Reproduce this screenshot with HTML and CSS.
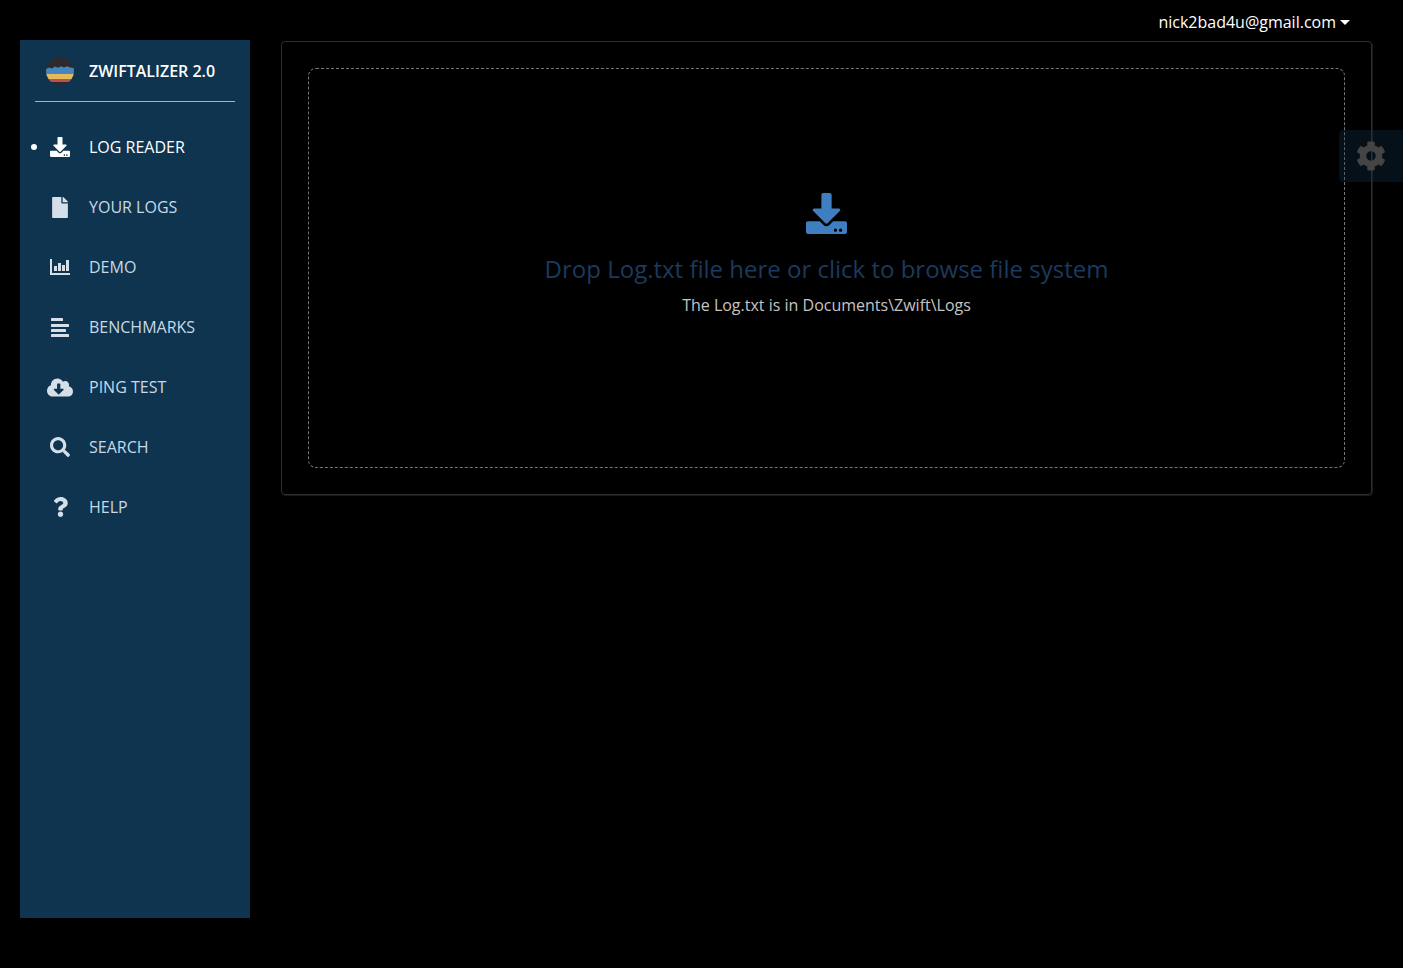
FILE: index.html
```html
<!DOCTYPE html>
<html lang="en">
<head>
  <meta charset="UTF-8">
  <meta name="viewport" content="width=device-width, initial-scale=1.0">
  <title>Zwiftalizer 2.0 - Log Reader</title>
  <link rel="stylesheet" href="styles.css">
</head>
<body>

<div class="sidebar">
  <div class="brand">
    <svg class="logo" viewBox="0 0 28 28">
      <defs><clipPath id="logo-clip"><circle cx="14" cy="14" r="14"/></clipPath></defs>
      <g clip-path="url(#logo-clip)">
        <rect width="28" height="28" fill="#2b2a2c"/>
        <path d="M0 12l3-1.4 3 .8 3-1.8 3 1.2 3-1.6 3 1.2 3-1.2 3 1.2 4 .6V17H0z" fill="#4585c2"/>
        <rect y="17" width="28" height="5.5" fill="#e3bb58"/>
        <rect y="22.5" width="28" height="2.5" fill="#b8505a"/>
      </g>
    </svg>
    <span class="brand-name">ZWIFTALIZER 2.0</span>
  </div>

  <ul class="menu">
    <li class="menu-item active">
      <span class="menu-icon">
        <svg class="icon-download" viewBox="0 0 512 512"><path d="M216 0h80c13.3 0 24 10.7 24 24v168h87.7c17.8 0 26.7 21.5 14.1 34.1L269.7 378.3c-7.5 7.5-19.8 7.5-27.3 0L90.1 226.1c-12.6-12.6-3.7-34.1 14.1-34.1H192V24c0-13.3 10.7-24 24-24zm296 376v112c0 13.3-10.7 24-24 24H24c-13.3 0-24-10.7-24-24V376c0-13.3 10.7-24 24-24h146.7l49 49c20.1 20.1 52.5 20.1 72.6 0l49-49H488c13.3 0 24 10.7 24 24zm-124 88c0-11-9-20-20-20s-20 9-20 20 9 20 20 20 20-9 20-20zm64 0c0-11-9-20-20-20s-20 9-20 20 9 20 20 20 20-9 20-20z"/></svg>
      </span>
      LOG READER
    </li>
    <li class="menu-item">
      <span class="menu-icon">
        <svg class="icon-file" viewBox="0 0 384 512"><path d="M224 136V0H24C10.7 0 0 10.7 0 24v464c0 13.3 10.7 24 24 24h336c13.3 0 24-10.7 24-24V160H248c-13.2 0-24-10.8-24-24zm160-14.1v6.1H256V0h6.1c6.4 0 12.5 2.5 17 7l97.9 98c4.5 4.5 7 10.6 7 16.9z"/></svg>
      </span>
      YOUR LOGS
    </li>
    <li class="menu-item">
      <span class="menu-icon">
        <svg class="icon-chart" viewBox="0 0 20 16"><path d="M0 0h2v14h18v2H0z"/><rect x="4" y="7" width="3" height="5"/><rect x="8" y="4" width="3" height="8"/><rect x="12" y="6" width="3" height="6"/><rect x="16" y="1" width="3" height="11"/></svg>
      </span>
      DEMO
    </li>
    <li class="menu-item">
      <span class="menu-icon">
        <svg class="icon-lines" viewBox="0 0 18 19"><rect width="12" height="3" rx=".6"/><rect y="6" width="18" height="3" rx=".6"/><rect y="11" width="15" height="3" rx=".6"/><rect y="16" width="18" height="3" rx=".6"/></svg>
      </span>
      BENCHMARKS
    </li>
    <li class="menu-item">
      <span class="menu-icon">
        <svg class="icon-cloud" viewBox="0 0 640 512"><path d="M537.6 226.6c4.1-10.7 6.4-22.4 6.4-34.6 0-53-43-96-96-96-19.7 0-38.1 6-53.3 16.2C367 64.2 315.3 32 256 32c-88.4 0-160 71.6-160 160 0 2.7.1 5.4.2 8.1C40.2 219.8 0 273.2 0 336c0 79.5 64.5 144 144 144h368c70.7 0 128-57.3 128-128 0-61.9-44-113.6-102.4-125.4zm-132.9 88.7L299.3 420.7c-6.2 6.2-16.4 6.2-22.6 0L171.3 315.3c-10.1-10.1-2.9-27.3 11.3-27.3H248V176c0-8.8 7.2-16 16-16h48c8.8 0 16 7.2 16 16v112h65.4c14.2 0 21.4 17.2 11.3 27.3z"/></svg>
      </span>
      PING TEST
    </li>
    <li class="menu-item">
      <span class="menu-icon">
        <svg class="icon-search" viewBox="0 0 512 512"><path d="M505 442.7L405.3 343c-4.5-4.5-10.6-7-17-7H372c27.6-35.3 44-79.7 44-128C416 93.1 322.9 0 208 0S0 93.1 0 208s93.1 208 208 208c48.3 0 92.7-16.4 128-44v16.3c0 6.4 2.5 12.5 7 17l99.7 99.7c9.4 9.4 24.6 9.4 33.9 0l28.3-28.3c9.4-9.4 9.4-24.6.1-34zM208 336c-70.7 0-128-57.2-128-128 0-70.7 57.2-128 128-128 70.7 0 128 57.2 128 128 0 70.7-57.2 128-128 128z"/></svg>
      </span>
      SEARCH
    </li>
    <li class="menu-item">
      <span class="menu-icon">
        <svg class="icon-help" viewBox="0 0 384 512"><path d="M202.021 0C122.202 0 70.503 32.703 29.914 91.026c-7.363 10.58-5.093 25.086 5.178 32.874l43.138 32.709c10.373 7.865 25.132 6.026 33.253-4.148 25.049-31.381 43.63-49.449 82.757-49.449 30.764 0 68.816 19.799 68.816 49.631 0 22.552-18.617 34.134-48.993 51.164-35.423 19.86-82.299 44.576-82.299 106.405V320c0 13.255 10.745 24 24 24h72.471c13.255 0 24-10.745 24-24v-5.773c0-42.86 125.268-44.645 125.268-160.627C377.504 66.256 286.902 0 202.021 0zM192 373.459c-38.196 0-69.271 31.075-69.271 69.271 0 38.195 31.075 69.27 69.271 69.27s69.271-31.075 69.271-69.271-31.075-69.27-69.271-69.27z"/></svg>
      </span>
      HELP
    </li>
  </ul>
</div>

<div class="main">
  <div class="topbar">
    <span class="user">nick2bad4u@gmail.com</span>
    <span class="caret"></span>
  </div>
  <div class="card">
    <div class="dropzone">
      <svg class="drop-icon" viewBox="0 0 512 512"><path d="M216 0h80c13.3 0 24 10.7 24 24v168h87.7c17.8 0 26.7 21.5 14.1 34.1L269.7 378.3c-7.5 7.5-19.8 7.5-27.3 0L90.1 226.1c-12.6-12.6-3.7-34.1 14.1-34.1H192V24c0-13.3 10.7-24 24-24zm296 376v112c0 13.3-10.7 24-24 24H24c-13.3 0-24-10.7-24-24V376c0-13.3 10.7-24 24-24h146.7l49 49c20.1 20.1 52.5 20.1 72.6 0l49-49H488c13.3 0 24 10.7 24 24zm-124 88c0-11-9-20-20-20s-20 9-20 20 9 20 20 20 20-9 20-20zm64 0c0-11-9-20-20-20s-20 9-20 20 9 20 20 20 20-9 20-20z"/></svg>
      <h2 class="drop-title">Drop Log.txt file here or click to browse file system</h2>
      <p class="drop-note">The Log.txt is in Documents\Zwift\Logs</p>
    </div>
  </div>
</div>

<div class="settings-tab">
  <svg class="icon-cog" viewBox="0 0 512 512"><path d="M487.4 315.7l-42.6-24.6c4.3-23.2 4.3-47 0-70.2l42.6-24.6c4.9-2.8 7.1-8.6 5.5-14-11.1-35.6-30-67.8-54.7-94.6-3.8-4.1-10-5.1-14.8-2.3L380.8 110c-17.9-15.4-38.5-27.3-60.8-35.1V25.8c0-5.6-3.9-10.5-9.4-11.7-36.7-8.2-74.3-7.8-109.2 0-5.5 1.2-9.4 6.1-9.4 11.7V75c-22.2 7.9-42.8 19.8-60.8 35.1L88.7 85.5c-4.9-2.8-11-1.9-14.8 2.3-24.7 26.7-43.6 58.9-54.7 94.6-1.7 5.4.6 11.2 5.5 14L67.3 221c-4.3 23.2-4.3 47 0 70.2l-42.6 24.6c-4.9 2.8-7.1 8.6-5.5 14 11.1 35.6 30 67.8 54.7 94.6 3.8 4.1 10 5.1 14.8 2.3l42.6-24.6c17.9 15.4 38.5 27.3 60.8 35.1v49.2c0 5.6 3.9 10.5 9.4 11.7 36.7 8.2 74.3 7.8 109.2 0 5.5-1.2 9.4-6.1 9.4-11.7v-49.2c22.2-7.9 42.8-19.8 60.8-35.1l42.6 24.6c4.9 2.8 11 1.9 14.8-2.3 24.7-26.7 43.6-58.9 54.7-94.6 1.5-5.5-.7-11.3-5.6-14.1zM256 336c-44.1 0-80-35.9-80-80s35.9-80 80-80 80 35.9 80 80-35.9 80-80 80z"/></svg>
</div>

</body>
</html>
```

FILE: styles.css
```css
* {
  box-sizing: border-box;
  margin: 0;
  padding: 0;
}
html,
body {
  height: 100%;
  overflow: hidden;
}
body {
  display: flex;
  align-items: flex-start;
  padding: 0 31px 0 20px;
  font-family: "Open Sans", "Noto Sans", sans-serif;
  font-size: 16px;
  background-color: #000;
}

/* sidebar */
.sidebar {
  flex: 0 0 230px;
  height: 878px;
  margin-top: 40px;
  background-color: #0f3450;
}
.brand {
  display: flex;
  align-items: center;
  height: 62px;
  margin: 0 15px;
  padding-left: 11px;
  border-bottom: 1px solid #9fb6c6;
}
.logo {
  width: 28px;
  height: 28px;
  margin-right: 15px;
  flex: none;
}
.brand-name {
  font-weight: 600;
  color: #fff;
}
.menu {
  list-style-type: none;
  padding-top: 15px;
}
.menu-item {
  position: relative;
  display: flex;
  align-items: center;
  height: 60px;
  color: #c8d9e6;
}
.menu-item.active {
  color: #fff;
}
.menu-item.active::before {
  content: "";
  position: absolute;
  left: 11px;
  top: 27px;
  width: 6px;
  height: 6px;
  border-radius: 50%;
  background-color: #fff;
}
.menu-icon {
  display: flex;
  justify-content: center;
  align-items: center;
  width: 30px;
  margin: 0 14px 0 25px;
}
.menu-icon svg {
  fill: #d5dfe8;
}
.menu-item.active .menu-icon svg {
  fill: #fff;
}
.icon-download { width: 20px; height: 20px; }
.icon-file { width: 16px; height: 21px; }
.icon-chart { width: 20px; height: 16px; }
.icon-lines { width: 18px; height: 19px; }
.icon-cloud { width: 26px; height: 21px; }
.icon-search { width: 20px; height: 20px; }
.icon-help { width: 15px; height: 20px; }

/* main column */
.main {
  flex: 1;
  margin-left: 31px;
}
.topbar {
  display: flex;
  justify-content: flex-end;
  align-items: center;
  height: 41px;
  padding: 3px 22px 0 0;
  color: #fff;
}
.caret {
  margin-left: 4px;
  border-top: 5px solid #fff;
  border-left: 5px solid transparent;
  border-right: 5px solid transparent;
}
.card {
  padding: 26px;
  border: 1px solid #2e2e2e;
  border-radius: 4px;
  box-shadow: 1px 1px 0 #1a1a1a;
}
.dropzone {
  display: flex;
  flex-direction: column;
  align-items: center;
  height: 400px;
  padding-top: 124px;
  border: 1px dashed #777;
  border-radius: 8px;
}
.drop-icon {
  width: 41px;
  height: 41px;
  fill: #3f7fbf;
}
.drop-title {
  margin-top: 17px;
  font-size: 24px;
  font-weight: 400;
  line-height: 36px;
  color: #1b3a5c;
}
.drop-note {
  margin-top: 6px;
  line-height: 24px;
  color: #c4c4c4;
}

/* settings tab over the right edge */
.settings-tab {
  position: absolute;
  top: 130px;
  right: 0;
  display: flex;
  align-items: center;
  width: 64px;
  height: 52px;
  padding-left: 17px;
  border-radius: 4px 0 0 4px;
  background-color: rgba(17, 52, 79, 0.3);
}
.icon-cog {
  width: 30px;
  height: 30px;
  fill: #444;
}
```
